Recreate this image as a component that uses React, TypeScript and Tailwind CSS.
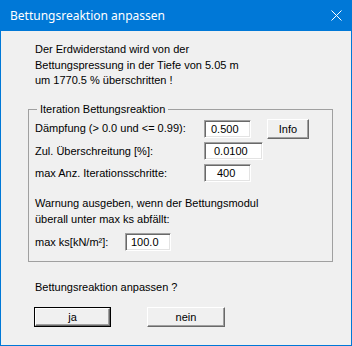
import React from "react";

function Field({ w, pl, value }: { w: string; pl: string; value: string }) {
  return (
    <div
      className={`${w} ${pl} h-[18px] flex items-center bg-white border border-t-[#a0a0a0] border-l-[#a0a0a0] border-b-white border-r-white shadow-[inset_1px_1px_0_#696969,inset_-1px_-1px_0_#e3e3e3] text-[11px] leading-[13px]`}
    >
      {value}
    </div>
  );
}

export default function App() {
  return (
    <div className="w-[352px] h-[346px] bg-[#0078d7] px-[1px] pb-[1px] flex flex-col">
      <div className="h-[31px] shrink-0 flex items-center justify-between pl-[9px] pr-[9px] text-white text-[12px] font-['Noto_Sans',sans-serif]">
        <span className="leading-[16px]">Bettungsreaktion anpassen</span>
        <svg width="11" height="11" viewBox="0 0 11 11">
          <path d="M0.5 0.5 L10.5 10.5 M10.5 0.5 L0.5 10.5" stroke="white" strokeWidth="1" fill="none" />
        </svg>
      </div>
      <div className="flex-1 bg-[#f0f0f0] text-black text-[11px] font-['Liberation_Sans',Arial,sans-serif] pl-[27px] pt-[11px]">
        <div className="pl-[7px] leading-[15.5px]">
          <div>Der Erdwiderstand wird von der</div>
          <div>Bettungspressung in der Tiefe von 5.05 m</div>
          <div>um 1770.5 % überschritten !</div>
        </div>

        <div className="relative mt-[20.5px] w-[305px] border border-[#a0a0a0] pt-[9px] pb-[9px]">
          <span className="absolute -top-[7px] left-[8px] px-[3px] leading-[13px] bg-[#f0f0f0]">
            Iteration Bettungsreaktion
          </span>
          <div className="flex items-center h-[20px] pl-[6px]">
            <span className="w-[169px] leading-[13px] -mt-[2px]">Dämpfung (&gt; 0.0 und &lt;= 0.99):</span>
            <Field w="w-[47px]" pl="pl-[6px]" value="0.500" />
            <button className="ml-[16px] w-[42px] h-[20px] flex items-center justify-center bg-[#f0f0f0] border border-t-white border-l-white border-b-[#696969] border-r-[#696969] shadow-[inset_-1px_-1px_0_#a0a0a0] text-[11px] leading-[13px]">
              Info
            </button>
          </div>
          <div className="mt-[2px] flex items-center h-[20px] pl-[6px]">
            <span className="w-[169px] leading-[13px]">Zul. Überschreitung [%]:</span>
            <Field w="w-[59px]" pl="pl-[9px]" value="0.0100" />
          </div>
          <div className="mt-[2px] flex items-center h-[20px] pl-[6px]">
            <span className="w-[169px] leading-[13px]">max Anz. Iterationsschritte:</span>
            <Field w="w-[47px]" pl="pl-[12px]" value="400" />
          </div>
          <div className="mt-[12px] pl-[6px] leading-[16px]">
            <div>Warnung ausgeben, wenn der Bettungsmodul</div>
            <div>überall unter max ks abfällt:</div>
          </div>
          <div className="mt-[5px] flex items-center h-[20px] pl-[6px]">
            <span className="w-[90px] leading-[13px]">max ks[kN/m²]:</span>
            <Field w="w-[46px]" pl="pl-[5px]" value="100.0" />
          </div>
        </div>

        <div className="mt-[17px] pl-[7px] leading-[16px]">Bettungsreaktion anpassen ?</div>

        <div className="mt-[12px] pl-[6px] flex gap-[36px]">
          <button className="w-[77px] h-[20px] border border-black bg-[#f0f0f0]">
            <div className="w-full h-full flex items-center justify-center border border-t-white border-l-white border-b-[#696969] border-r-[#696969] shadow-[inset_-1px_-1px_0_#a0a0a0] text-[11px] leading-[13px]">
              ja
            </div>
          </button>
          <button className="w-[78px] h-[20px] flex items-center justify-center bg-[#f0f0f0] border border-t-white border-l-white border-b-[#696969] border-r-[#696969] shadow-[inset_-1px_-1px_0_#a0a0a0] text-[11px] leading-[13px]">
            nein
          </button>
        </div>
      </div>
    </div>
  );
}
